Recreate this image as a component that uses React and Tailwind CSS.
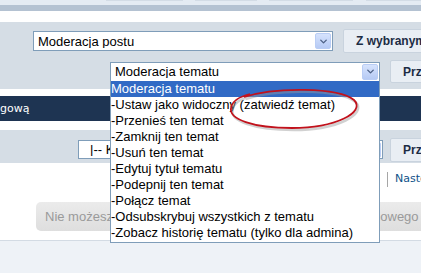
import { ChevronDown } from 'lucide-react';

const moderationItems = [
  'Moderacja tematu',
  '-Ustaw jako widoczny (zatwiedź temat)',
  '-Przenieś ten temat',
  '-Zamknij ten temat',
  '-Usuń ten temat',
  '-Edytuj tytuł tematu',
  '-Podepnij ten temat',
  '-Połącz temat',
  '-Odsubskrybuj wszystkich z tematu',
  '-Zobacz historię tematu (tylko dla admina)',
];

// XP-like select box
const Select = ({ value, className, textClass = 'pl-[4px]' }) => (
  <div className={`shrink-0 flex items-center bg-white border border-[#7f9db9] ${className}`}>
    <span className={`flex-1 text-[13px] leading-none text-black whitespace-nowrap overflow-hidden ${textClass}`}>
      {value}
    </span>
    <span className="w-[16px] h-[16px] mr-[1px] flex items-center justify-center rounded-[2px] border border-[#b9cdf5] bg-gradient-to-b from-[#d6e3fd] to-[#b6caf4]">
      <ChevronDown className="w-[11px] h-[11px] text-[#4d6185]" strokeWidth={3} />
    </span>
  </div>
);

const Button = ({ children, className }) => (
  <div className={`shrink-0 flex items-center pl-[12px] bg-[#e9eef4] border border-[#c9d3de] rounded-[2px] text-[12px] font-bold text-[#1c2c44] whitespace-nowrap ${className}`}>
    {children}
  </div>
);

export default function App() {
  return (
    <div className="relative w-[421px] h-[273px] overflow-hidden bg-white flex flex-col font-['Liberation_Sans',Arial,sans-serif]">
      {/* górny pasek z zakładkami */}
      <div className="h-[5px] bg-[#e4ebf3] flex">
        <div className="ml-[106px] w-[77px] h-[1px] bg-[#d3dce6]" />
        <div className="ml-[12px] w-[62px] h-[1px] bg-[#d3dce6]" />
        <div className="ml-[12px] w-[84px] h-[1px] bg-[#d3dce6]" />
        <div className="ml-[13px] flex-1 h-[1px] bg-[#d3dce6]" />
      </div>
      <div className="h-[6px] bg-[#b4c2d2]" />
      <div className="h-[11px] bg-white" />

      {/* moderacja */}
      <div className="h-[67px] bg-[#d5dde5] pt-[7px]">
        <div className="flex items-center h-[24px] pl-[33px] gap-[10px]">
          <Select value="Moderacja postu" className="w-[300px] h-[20px]" />
          <Button className="h-[24px] w-[100px]">Z wybranymi</Button>
        </div>
        <div className="flex items-center h-[23px] mt-[7px] pl-[110px] gap-[10px]">
          <Select value="Moderacja tematu" className="w-[270px] h-[20px]" />
          <Button className="h-[23px] w-[60px]">Przejdź</Button>
        </div>
      </div>
      <div className="h-[7px] bg-white" />

      {/* ciemny pasek */}
      <div className="h-[25px] bg-[#1e3452] flex items-center">
        <span className="text-[11px] text-white font-['DejaVu_Sans',Verdana,sans-serif] leading-none">gową</span>
      </div>
      <div className="h-[9px] bg-white" />

      {/* skocz do */}
      <div className="h-[33px] bg-[#d5dde5] flex items-start pl-[78px] pt-[8px] gap-[7px]">
        <Select value="|-- Kategoria" className="w-[305px] h-[19px] mt-[2px]" textClass="pl-[11px]" />
        <Button className="h-[24px] w-[60px]">Przejdź</Button>
      </div>

      {/* paginacja + przycisk */}
      <div className="h-[77px] bg-white flex flex-col">
        <div className="flex items-center h-[15px] mt-[9px] pl-[387px]">
          <div className="shrink-0 w-[1px] h-[15px] bg-[#a6a6a6]" />
          <span className="shrink-0 ml-[7px] text-[11px] text-[#105289] font-['DejaVu_Sans',Verdana,sans-serif] whitespace-nowrap">Następna</span>
        </div>
        <div className="mt-[15px] ml-[36px] h-[29px] flex items-center pl-[9px] rounded-l-[5px] bg-gradient-to-b from-[#ebebeb] to-[#dedede] text-[13px] text-[#9a9a9a] whitespace-nowrap">
          Nie możesz odpowiadać w tym temacie ani też zakładać nowego tematu
        </div>
      </div>
      <div className="h-[1px] bg-[#d3dbe4]" />
      <div className="flex-1 bg-[#eef2f7]" />

      {/* rozwinięta lista */}
      <ul className="absolute left-[110px] top-[81px] w-[270px] h-[162px] bg-white border border-[#7f9db9] border-t-0">
        {moderationItems.map((item, i) => (
          <li
            key={item}
            className={`h-[16px] text-[13px] leading-[16px] whitespace-nowrap ${i === 0 ? 'bg-[#316ac5] text-white' : 'text-black'}`}
          >
            {item}
          </li>
        ))}
      </ul>

      {/* czerwona obwódka */}
      <svg className="absolute left-0 top-0 pointer-events-none" width="421" height="273">
        <path
          d="M244 97 C275 87 338 87 354 100 C366 112 336 128 292 128 C252 128 229 119 231 108 C232 101 238 97 250 94"
          fill="none"
          stroke="#9a9a9a"
          strokeOpacity="0.45"
          strokeWidth="2.5"
          transform="translate(1.5 2)"
        />
        <path
          d="M244 97 C275 87 338 87 354 100 C366 112 336 128 292 128 C252 128 229 119 231 108 C232 101 238 97 250 94"
          fill="none"
          stroke="#c1121c"
          strokeWidth="1.8"
        />
      </svg>
    </div>
  );
}
